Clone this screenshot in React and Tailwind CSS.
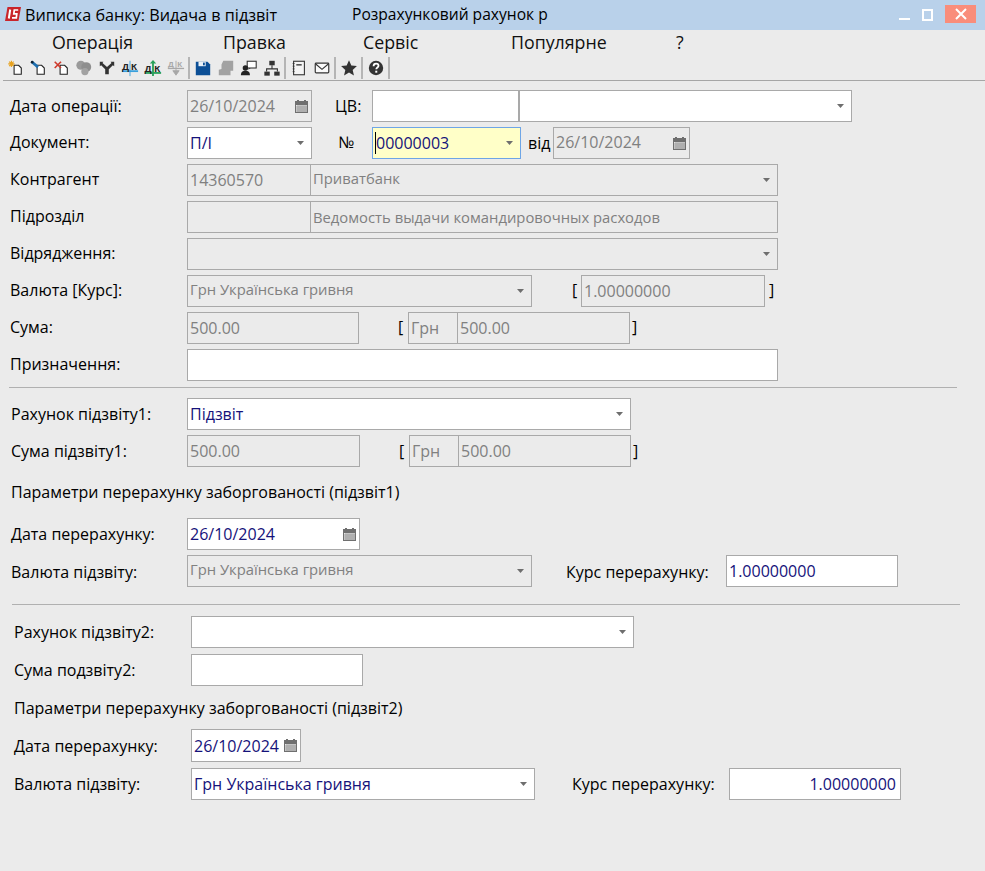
import React from "react";

const FONT = "[font-family:'Open_Sans','Noto_Sans',sans-serif]";

function Arrow({ className = "" }) {
  return (
    <svg width="7" height="4" viewBox="0 0 7 4" className={"shrink-0 " + className}>
      <path d="M0 0h7L3.500 4z" fill="#6e6e6e" />
    </svg>
  );
}

function Cal({ className = "" }) {
  return (
    <svg width="13" height="13" viewBox="0 0 13 13" className={"shrink-0 " + className}>
      <rect x="0" y="1" width="13" height="12" fill="#6f6f6f" />
      <rect x="2" y="0" width="2" height="2" fill="#6f6f6f" />
      <rect x="9" y="0" width="2" height="2" fill="#6f6f6f" />
      <path d="M1 5h11v7H1z" fill="#e4e4e4" />
      <path d="M3 5v7M5 5v7M7 5v7M9 5v7M11 5v7M1 7h11M1 9h11M1 11h11" stroke="#8a8a8a" strokeWidth="0.7" />
    </svg>
  );
}

function Field({ className = "", children, arrow, cal, textClass = "" }) {
  return (
    <div className={"flex h-8 shrink-0 items-center border border-[#a9a9a9] pl-[2px] " + className}>
      <span className={"min-w-0 flex-1 truncate whitespace-nowrap " + textClass}>{children}</span>
      {arrow && <Arrow className="mr-[7px]" />}
      {cal && <Cal className="mr-[3px]" />}
    </div>
  );
}

const dis = "text-[#808080]";
const disSm = "pb-[3px] text-[14.800px] text-[#808080]";
const on = "bg-white text-[#15127a]";

function Row({ className = "", children }) {
  return <div className={"flex h-8 items-center " + className}>{children}</div>;
}

function Label({ className = "", children }) {
  return <span className={"shrink-0 whitespace-nowrap text-black " + className}>{children}</span>;
}

const ic = { width: 18, height: 18, viewBox: "0 0 20 20" };

function DocBase() {
  return <path d="M9 7h5l3 3v7H9z" fill="#fff" stroke="#222" strokeWidth="1.2" />;
}

const tools = [
  <svg {...ic}><DocBase /><path d="M6 2v7M2.500 5.500h7M3.500 3l5 5M8.500 3l-5 5" stroke="#e7a21f" strokeWidth="1.3" /></svg>,
  <svg {...ic}><DocBase /><path d="M3 3l7 6" stroke="#1d6fb0" strokeWidth="3" /><circle cx="3.500" cy="3.500" r="1.500" fill="#123" /></svg>,
  <svg {...ic}><DocBase /><path d="M3 3l7 7M10 3l-7 7" stroke="#cf3a2c" strokeWidth="1.8" /></svg>,
  <svg {...ic}><circle cx="6.500" cy="7" r="5" fill="#9a9a9a" /><circle cx="12.500" cy="9" r="5.500" fill="#8e8e8e" /><circle cx="11" cy="14" r="4" fill="#a2a2a2" /></svg>,
  <svg {...ic}><path d="M2 3l4 0-1 1.500L10 9l5-4.500L14 3h4v5l-1.500-1L12 11.500V17H8v-5.500L3.500 7 2 8z" fill="#333" /></svg>,
  <svg {...ic}><path d="M10 2v17" stroke="#3aa0dc" strokeWidth="1" /><path d="M1 13.500h18" stroke="#3aa0dc" strokeWidth="2" /><text x="1" y="12" fontSize="11" fontWeight="700" fontFamily="Liberation Sans" fill="#222">Д</text><text x="11" y="12" fontSize="11" fontWeight="700" fontFamily="Liberation Sans" fill="#222">К</text></svg>,
  <svg {...ic}><path d="M10 1l3.500 4h-2.500v14H9V5H6.500z" fill="#27a05a" /><path d="M1 15.500h18" stroke="#27a05a" strokeWidth="2" /><text x="0.500" y="14" fontSize="11" fontWeight="700" fontFamily="Liberation Sans" fill="#222">Д</text><text x="11.500" y="14" fontSize="11" fontWeight="700" fontFamily="Liberation Sans" fill="#222">К</text></svg>,
  <svg {...ic}><path d="M10 2v13M6.500 13l3.500 5 3.500-5z" fill="#a8a8a8" stroke="#a8a8a8" /><path d="M1 10.500h18" stroke="#a8a8a8" strokeWidth="1.500" /><text x="1" y="9" fontSize="9" fontWeight="700" fontFamily="Liberation Sans" fill="#a8a8a8">Д</text><text x="11.500" y="9" fontSize="9" fontWeight="700" fontFamily="Liberation Sans" fill="#a8a8a8">К</text></svg>,
  "sep",
  <svg {...ic}><path d="M2 3h13l3 3v12H2z" fill="#0c4f96" /><rect x="5" y="3" width="8" height="5" fill="#eaf1f8" /><rect x="10" y="4" width="2" height="3" fill="#0c4f96" /></svg>,
  <svg {...ic}><path d="M7 2h11v11h-3v5H2v-6l3-1V6z" fill="#a2a2a2" /></svg>,
  <svg {...ic}><rect x="8" y="2.500" width="10" height="7.500" fill="#fff" stroke="#333" strokeWidth="1.200" /><path d="M10 10l-1 2 3-2" fill="#333" /><circle cx="6" cy="10" r="3" fill="#222" /><path d="M1 18c0-4 2-5 5-5s5 1 5 5z" fill="#222" /></svg>,
  <svg {...ic}><rect x="7" y="2" width="6" height="5" fill="#333" /><path d="M10 7v4M4 14v-3h12v3" stroke="#333" strokeWidth="1.200" fill="none" /><rect x="1.500" y="14" width="6" height="4.500" fill="#333" /><rect x="12.500" y="14" width="6" height="4.500" fill="#333" /></svg>,
  "sep",
  <svg {...ic}><rect x="4" y="2.500" width="12" height="15" fill="#f4f4f4" stroke="#333" strokeWidth="1.200" /><path d="M7 6.500h6" stroke="#333" strokeWidth="1.500" /><path d="M3 5h2M3 8h2M3 11h2M3 14h2" stroke="#333" strokeWidth="1" /></svg>,
  <svg {...ic}><rect x="2.500" y="4.500" width="15" height="11" rx="1" fill="#fafafa" stroke="#333" strokeWidth="1.300" /><path d="M3 5.500l7 6 7-6" fill="none" stroke="#333" strokeWidth="1.300" /></svg>,
  "sep",
  <svg {...ic}><path d="M10 1.500l2.600 5.800 6.200.6-4.700 4.200 1.400 6.200L10 15.100l-5.500 3.200 1.400-6.200L1.200 7.900l6.200-.6z" fill="#333" /></svg>,
  "sep",
  <svg {...ic}><circle cx="10" cy="10" r="8" fill="#333" /><path d="M7.300 8c0-1.800 1.200-2.800 2.800-2.800s2.700 1 2.700 2.300c0 2-2.500 2-2.500 4" fill="none" stroke="#fff" strokeWidth="2" /><rect x="9.200" y="13" width="2.200" height="2.200" fill="#fff" /></svg>,
  "sep",
];

const menu = [
  ["Операція", "w-[171px]"],
  ["Правка", "w-[140px]"],
  ["Сервіс", "w-[148px]"],
  ["Популярне", "w-[165px]"],
  ["?", "w-[20px]"],
];

export default function App() {
  return (
    <div className={"h-[871px] w-[985px] overflow-hidden bg-[#ebebeb] text-[16px] text-black " + FONT}>
      {/* Title bar */}
      <div className="flex h-[30px] items-center bg-[#b9d1ea] pl-[5px]">
        <svg width="16" height="14" viewBox="0 0 16 14" className="mt-[-3px] shrink-0">
          <path d="M2.500 0H16l-2.500 14H0z" fill="#c9252b" />
          <path d="M5.200 2.500L3.800 11.500" stroke="#fff" strokeWidth="2" />
          <path d="M13.200 3H9.300L8.800 6.800h3l-.5 4H7" stroke="#fff" strokeWidth="1.700" fill="none" />
        </svg>
        <span className="ml-[4px] w-[327px] whitespace-nowrap text-[16.200px]">Виписка банку: Видача в підзвіт</span>
        <span className="w-[547px] whitespace-nowrap text-[15.600px]">Розрахунковий рахунок р</span>
        <span className="mt-[8px] h-[2px] w-[11px] bg-white" />
        <span className="ml-[12px] mb-[1px] h-[12px] w-[11px] border-2 border-white" />
        <span className="ml-[12px] mb-[2px] flex h-[18px] w-[31px] items-center justify-center bg-[#f98d7b]">
          <svg width="12" height="12" viewBox="0 0 12 12"><path d="M1 1l10 10M11 1L1 11" stroke="#fff" strokeWidth="2" /></svg>
        </span>
      </div>

      {/* Menu */}
      <div className="flex h-[25px] items-center pl-[52px] text-[17.800px]">
        {menu.map(([t, w]) => (
          <span key={t} className={"text-[#111] " + w}>{t}</span>
        ))}
      </div>

      {/* Toolbar */}
      <div className="ml-[3px] flex h-[26px] items-center border-b border-[#a6a6a6] pl-0">
        {tools.map((t, i) =>
          t === "sep" ? (
            <span key={i} className="mx-[1px] h-[22px] w-[2px] bg-[#b5b5b5]" />
          ) : (
            <span key={i} className="flex w-[23px] justify-center pt-[1px]">{t}</span>
          )
        )}
      </div>

      {/* Upper form */}
      <div className="mt-[9px] flex flex-col gap-[5px] pl-[10px]">
        <Row>
          <Label className="w-[177px] text-[16.300px]">Дата операції:</Label>
          <Field className="w-[125px]" textClass={dis} cal>26/10/2024</Field>
          <Label className="ml-[23px] w-[37px]">ЦВ:</Label>
          <Field className="w-[147px] bg-white" />
          <Field className="w-[333px] bg-white" arrow />
        </Row>
        <Row>
          <Label className="w-[177px] pb-[2px]">Документ:</Label>
          <Field className={"w-[125px] " + on} arrow>П/І</Field>
          <Label className="ml-[26px] w-[34px] pb-[2px]">№</Label>
          <Field className="w-[149px] !border-[#6ea5e6] bg-[#ffffc8] text-[#15127a]" arrow>
            <span className="border-l border-black">00000003</span>
          </Field>
          <Label className="ml-[7px] w-[25px]">від</Label>
          <Field className="w-[137px]" textClass="pb-[3px] text-[#808080]" cal>26/10/2024</Field>
        </Row>
        <Row>
          <Label className="w-[177px] pb-[2px]">Контрагент</Label>
          <Field className="w-[124px]" textClass={dis}>14360570</Field>
          <Field className="w-[467px] border-l-0" textClass={disSm} arrow>Приватбанк</Field>
        </Row>
        <Row>
          <Label className="w-[177px] pb-[2px]">Підрозділ</Label>
          <Field className="w-[124px]" />
          <Field className="w-[467px] border-l-0" textClass="text-[14.800px] text-[#808080]">Ведомость выдачи командировочных расходов</Field>
        </Row>
        <Row>
          <Label className="w-[177px] pb-[2px]">Відрядження:</Label>
          <Field className="w-[591px]" arrow />
        </Row>
        <Row>
          <Label className="w-[177px] pb-[2px]">Валюта [Курс]:</Label>
          <Field className="w-[345px]" textClass={disSm} arrow>Грн Українська гривня</Field>
          <Label className="ml-[40px] w-[9px] pb-[2px]">[</Label>
          <Field className="w-[184px]" textClass={dis}>1.00000000</Field>
          <Label className="ml-[4px] pb-[2px]">]</Label>
        </Row>
        <Row>
          <Label className="w-[177px] pb-[2px]">Сума:</Label>
          <Field className="w-[172px]" textClass={dis}>500.00</Field>
          <Label className="ml-[39px] w-[10px] pb-[2px]">[</Label>
          <Field className="w-[50px]" textClass={dis}>Грн</Field>
          <Field className="w-[172px] border-l-0" textClass={dis}>500.00</Field>
          <Label className="ml-[2px] pb-[2px]">]</Label>
        </Row>
        <Row>
          <Label className="w-[177px] pb-[2px]">Призначення:</Label>
          <Field className="w-[591px] bg-white" />
        </Row>
      </div>

      <div className="ml-[9px] mt-[6px] h-px w-[948px] bg-[#b0b0b0]" />

      {/* Section 1 */}
      <div className="mt-[10px] flex flex-col gap-[5px] pl-[11px]">
        <Row>
          <Label className="w-[176px]">Рахунок підзвіту1:</Label>
          <Field className={"w-[444px] " + on} arrow>Підзвіт</Field>
        </Row>
        <Row>
          <Label className="w-[176px]">Сума підзвіту1:</Label>
          <Field className="w-[173px]" textClass={dis}>500.00</Field>
          <Label className="ml-[39px] w-[10px]">[</Label>
          <Field className="w-[50px]" textClass={dis}>Грн</Field>
          <Field className="w-[172px] border-l-0" textClass={dis}>500.00</Field>
          <Label className="ml-[2px]">]</Label>
        </Row>
        <Row className="mb-[1px] !h-[40px]">
          <Label>Параметри перерахунку заборгованості (підзвіт1)</Label>
        </Row>
        <Row>
          <Label className="w-[176px]">Дата перерахунку:</Label>
          <Field className={"w-[173px] " + on} cal>26/10/2024</Field>
        </Row>
        <Row>
          <Label className="w-[176px] pt-[2px]">Валюта підзвіту:</Label>
          <Field className="w-[345px]" textClass={disSm} arrow>Грн Українська гривня</Field>
          <Label className="ml-[34px] w-[160px] pt-[2px]">Курс перерахунку:</Label>
          <Field className={"w-[172px] " + on}>1.00000000</Field>
        </Row>
      </div>

      <div className="ml-[12px] mt-[17px] h-px w-[948px] bg-[#b0b0b0]" />

      {/* Section 2 */}
      <div className="mt-[11px] flex flex-col gap-[6px] pl-[14px]">
        <Row>
          <Label className="w-[177px]">Рахунок підзвіту2:</Label>
          <Field className="w-[443px] bg-white" arrow />
        </Row>
        <Row>
          <Label className="w-[177px]">Сума подзвіту2:</Label>
          <Field className="w-[172px] bg-white" />
        </Row>
        <Row className="!h-[31px]">
          <Label>Параметри перерахунку заборгованості (підзвіт2)</Label>
        </Row>
        <Row className="!h-[33px]">
          <Label className="w-[177px]">Дата перерахунку:</Label>
          <Field className={"!h-[33px] w-[110px] " + on} cal>26/10/2024</Field>
        </Row>
        <Row>
          <Label className="w-[177px]">Валюта підзвіту:</Label>
          <Field className={"w-[344px] " + on} arrow>Грн Українська гривня</Field>
          <Label className="ml-[37px] w-[157px]">Курс перерахунку:</Label>
          <Field className={"w-[172px] " + on} textClass="pr-[4px] text-right">1.00000000</Field>
        </Row>
      </div>
    </div>
  );
}
